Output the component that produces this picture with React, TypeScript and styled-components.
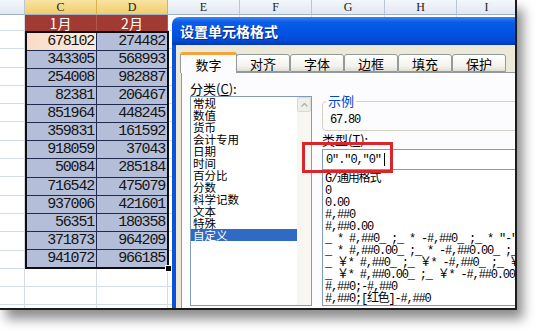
// 设置单元格格式 截图复刻
import styled, { createGlobalStyle } from 'styled-components';

const CJK = `'Noto Sans CJK SC', 'Liberation Sans', sans-serif`;
const MONO = `'Liberation Mono', 'Noto Sans CJK SC', monospace`;

const GlobalStyle = createGlobalStyle`
  html, body {
    margin: 0;
    padding: 0;
    background: #ffffff;
  }
  body {
    font-family: ${CJK};
  }
`;

const Page = styled.div`
  width: 538px;
  height: 333px;
  overflow: hidden;
  background: #ffffff;
`;

const Shot = styled.div`
  position: relative;
  width: 515px;
  height: 308px;
  overflow: hidden;
  background: #ffffff;
  border-right: 2px solid #1c1c1c;
  border-bottom: 2px solid #1c1c1c;
  box-shadow: 6px 9px 11px rgba(0, 0, 0, 0.45);
`;

/* ---------- spreadsheet ---------- */

const Sheet = styled.div`
  display: grid;
  grid-template-columns: 25px 72px 71px 72px 72px 73px 72px 60px;
  grid-template-rows: 15px 16px repeat(16, 18.3px);
`;

const ColHeader = styled.div<{ $sel?: boolean }>`
  display: flex;
  align-items: center;
  justify-content: center;
  background: ${(p) =>
    p.$sel ? 'linear-gradient(#f9e4a4, #f1cd6a)' : 'linear-gradient(#f4f7fb, #e1e8f2)'};
  border-right: 1px solid ${(p) => (p.$sel ? '#dcb14e' : '#b9c6d8')};
  border-bottom: 1px solid #9fb2ca;
  font: 12px 'Liberation Serif', serif;
  color: #1b1b1b;
`;

const MonthCell = styled.div`
  display: flex;
  align-items: center;
  justify-content: center;
  background: #a13a32;
  border-right: 1px solid #b4574f;
  font: 14px ${CJK};
  color: #ffffff;
`;

const GridCell = styled.div`
  border-right: 1px solid #d6dce6;
  border-bottom: 1px solid #d6dce6;
`;

const Selection = styled.div`
  position: relative;
  grid-column: 2 / 4;
  grid-row: 3 / 16;
  margin-right: -1px;
  display: grid;
  grid-template-columns: 69px 1fr;
  grid-auto-rows: 1fr;
  gap: 1px;
  background: #1f2a4d;
  border: 2px solid #0e0e0e;
`;

const NumCell = styled.div<{ $active?: boolean }>`
  display: flex;
  align-items: center;
  justify-content: flex-end;
  padding-right: 2px;
  background: ${(p) => (p.$active ? 'linear-gradient(90deg, #f9dcc8, #fcebdf)' : '#b5bed8')};
  font: 15px ${MONO};
  letter-spacing: -1.2px;
  color: #141414;
`;

const FillHandle = styled.div`
  position: absolute;
  right: -5px;
  bottom: -5px;
  width: 5px;
  height: 5px;
  background: #000000;
  border: 1px solid #ffffff;
`;

/* ---------- dialog ---------- */

const Dialog = styled.div`
  position: absolute;
  left: 172px;
  top: 17px;
  width: 372px;
  height: 292px;
  display: flex;
  flex-direction: column;
`;

const TitleBar = styled.div`
  height: 28px;
  flex: none;
  display: flex;
  align-items: center;
  padding-left: 8px;
  border-radius: 7px 7px 0 0;
  background: linear-gradient(#3a86f4 0%, #0b5ce9 18%, #0054e3 55%, #004ad6 85%, #0038b0 100%);
  font: bold 14px ${CJK};
  color: #ffffff;
  text-shadow: 1px 1px 0 #0a2a86;
`;

const Body = styled.div`
  flex: 1;
  display: flex;
  flex-direction: column;
  padding: 7px 0 3px 5px;
  background: #ece9d8;
  border-left: 4px solid #0a52dc;
`;

const TabRow = styled.div`
  display: flex;
  align-items: flex-end;
  height: 20px;
  position: relative;
  z-index: 1;
`;

const Tab = styled.div<{ $active?: boolean }>`
  box-sizing: border-box;
  width: ${(p) => (p.$active ? '57px' : '54px')};
  height: ${(p) => (p.$active ? '21px' : '18px')};
  margin: ${(p) => (p.$active ? '0 -1px -1px -1px' : '0')};
  display: flex;
  align-items: center;
  justify-content: center;
  border: 1px solid #919b9c;
  border-bottom: ${(p) => (p.$active ? 'none' : '1px solid #919b9c')};
  border-top: ${(p) => (p.$active ? '3px solid #f2a33a' : '1px solid #919b9c')};
  border-radius: 3px 3px 0 0;
  background: ${(p) => (p.$active ? '#fcfcfe' : 'linear-gradient(#ffffff, #f3f2ec 70%, #e2ddd2)')};
  font: 13px ${CJK};
  color: #000000;
`;

const Panel = styled.div`
  flex: 1;
  min-height: 0;
  display: grid;
  grid-template-columns: 122px 1fr;
  column-gap: 10px;
  padding: 9px 0 2px 8px;
  background: #fcfcfe;
  border: 1px solid #919b9c;
`;

const Column = styled.div`
  display: flex;
  flex-direction: column;
  min-height: 0;
`;

const FieldLabel = styled.div`
  height: 14px;
  font: 13px/14px ${CJK};
  color: #000000;
  white-space: nowrap;
`;

const ListBox = styled.div`
  flex: 1;
  min-height: 0;
  display: flex;
  background: #ffffff;
  border: 1px solid #7f9db9;
  overflow: hidden;
`;

const ListItems = styled.div`
  flex: 1;
`;

const CategoryItem = styled.div<{ $sel?: boolean }>`
  height: 12px;
  padding-left: 2px;
  font: 11.5px/12px ${CJK};
  color: ${(p) => (p.$sel ? '#ffffff' : '#000000')};
  background: ${(p) => (p.$sel ? '#316ac5' : 'transparent')};
  white-space: nowrap;
`;

const ScrollTrack = styled.div`
  width: 14px;
  background: #f7f6f1;
`;

const ScrollButton = styled.div`
  height: 13px;
  display: flex;
  align-items: center;
  justify-content: center;
  background: #efeee8;
  border: 1px solid #dcdad0;
  border-radius: 2px;
`;

const SampleGroup = styled.fieldset`
  box-sizing: border-box;
  height: 37px;
  margin: 12px 0 0;
  padding: 5px 7px 0;
  border: 1px solid #d3d1c4;
  border-radius: 4px;
`;

const SampleLegend = styled.legend`
  padding: 0 2px;
  margin-left: -4px;
  font: 13px/14px ${CJK};
  color: #0046d5;
`;

const SampleValue = styled.div`
  font: 12px/14px ${MONO};
  letter-spacing: -1.2px;
  color: #000000;
`;

const TypeLabel = styled(FieldLabel)`
  margin-top: 2px;
`;

const TypeInput = styled.div`
  height: 19px;
  flex: none;
  margin-top: 2px;
  display: flex;
  align-items: center;
  padding-left: 3px;
  background: #ffffff;
  border: 1px solid #7f9db9;
  font: 12px ${MONO};
  letter-spacing: -1.1px;
  color: #000000;
  white-space: pre;
`;

const Caret = styled.span`
  display: inline-block;
  width: 1px;
  height: 13px;
  margin-left: 3px;
  background: #000000;
`;

const TypeList = styled.div`
  flex: 1;
  min-height: 0;
  padding: 3px 0 0 2px;
  background: #ffffff;
  border: 1px solid #7f9db9;
  border-top: none;
  overflow: hidden;
`;

const TypeItem = styled.div`
  height: 12px;
  font: 12px/12px ${MONO};
  letter-spacing: -1.2px;
  color: #000000;
  white-space: pre;
`;

const Highlight = styled.div`
  position: absolute;
  left: 302px;
  top: 142px;
  width: 91px;
  height: 31px;
  box-sizing: border-box;
  border: 3px solid #d9262b;
`;

const COLS = ['', 'C', 'D', 'E', 'F', 'G', 'H', 'I'];
const JAN = [678102, 343305, 254008, 82381, 851964, 359831, 918059, 50084, 716542, 937006, 56351, 371873, 941072];
const FEB = [274482, 568993, 982887, 206467, 448245, 161592, 37043, 285184, 475079, 421601, 180358, 964209, 966185];
const TABS = ['数字', '对齐', '字体', '边框', '填充', '保护'];
const CATEGORIES = ['常规', '数值', '货币', '会计专用', '日期', '时间', '百分比', '分数', '科学记数', '文本', '特殊', '自定义'];
const TYPES = [
  'G/通用格式',
  '0',
  '0.00',
  '#,##0',
  '#,##0.00',
  '_ * #,##0_ ;_ * -#,##0_ ;_ * "-"_ ;_ @_ ',
  '_ * #,##0.00_ ;_ * -#,##0.00_ ;_ * "-"??_ ;_ @_ ',
  '_ ￥* #,##0_ ;_ ￥* -#,##0_ ;_ ￥* "-"_ ;_ @_ ',
  '_ ￥* #,##0.00_ ;_ ￥* -#,##0.00_ ;_ ￥* "-"??_ ;_ @_ ',
  '#,##0;-#,##0',
  '#,##0;[红色]-#,##0',
];

export default function App() {
  const blanks = (n: number, key: string) =>
    Array.from({ length: n }, (_, i) => <GridCell key={`${key}-${i}`} />);

  return (
    <Page>
      <GlobalStyle />
      <Shot>
        <Sheet>
          {COLS.map((c, i) => (
            <ColHeader key={`h-${i}`} $sel={c === 'C' || c === 'D'}>
              {c}
            </ColHeader>
          ))}
          <GridCell />
          <MonthCell>1月</MonthCell>
          <MonthCell>2月</MonthCell>
          {blanks(5, 'm')}
          <Selection>
            {JAN.map((v, i) => [
              <NumCell key={`c-${i}`} $active={i === 0}>
                {v}
              </NumCell>,
              <NumCell key={`d-${i}`}>{FEB[i]}</NumCell>,
            ])}
            <FillHandle />
          </Selection>
          {JAN.map((_, i) => [
            <GridCell key={`b-${i}`} />,
            ...blanks(5, `r-${i}`),
          ])}
          {blanks(24, 'tail')}
        </Sheet>

        <Dialog>
          <TitleBar>设置单元格格式</TitleBar>
          <Body>
            <TabRow>
              {TABS.map((t, i) => (
                <Tab key={t} $active={i === 0}>
                  {t}
                </Tab>
              ))}
            </TabRow>
            <Panel>
              <Column>
                <FieldLabel>
                  分类(<u>C</u>):
                </FieldLabel>
                <ListBox>
                  <ListItems>
                    {CATEGORIES.map((c) => (
                      <CategoryItem key={c} $sel={c === '自定义'}>
                        {c}
                      </CategoryItem>
                    ))}
                  </ListItems>
                  <ScrollTrack>
                    <ScrollButton>
                      <svg width="7" height="4" viewBox="0 0 7 4">
                        <path d="M0.5 3.5 L3.5 0.5 L6.5 3.5" fill="none" stroke="#b4b1a6" strokeWidth="1.4" />
                      </svg>
                    </ScrollButton>
                  </ScrollTrack>
                </ListBox>
              </Column>
              <Column>
                <SampleGroup>
                  <SampleLegend>示例</SampleLegend>
                  <SampleValue>67.80</SampleValue>
                </SampleGroup>
                <TypeLabel>
                  类型(<u>T</u>):
                </TypeLabel>
                <TypeInput>
                  {'0"."0,"0"'}
                  <Caret />
                </TypeInput>
                <TypeList>
                  {TYPES.map((t) => (
                    <TypeItem key={t}>{t}</TypeItem>
                  ))}
                </TypeList>
              </Column>
            </Panel>
          </Body>
        </Dialog>

        <Highlight />
      </Shot>
    </Page>
  );
}
